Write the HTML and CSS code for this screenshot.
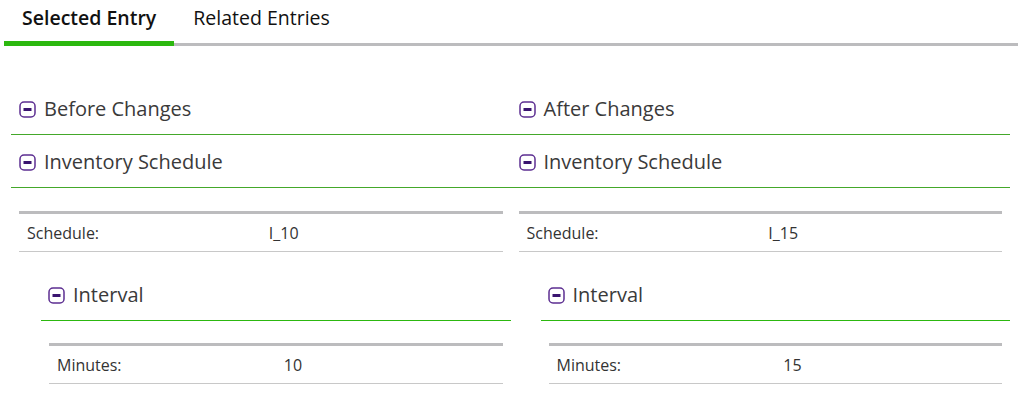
FILE: index.html
```html
<!DOCTYPE html>
<html>
<head>
<meta charset="utf-8">
<link rel="stylesheet" href="styles.css">
</head>
<body>
<div class="tabs">
  <div class="tab active">Selected Entry</div>
  <div class="tab">Related Entries</div>
</div>
<div class="content">
  <div class="col">
    <div class="hdr"><svg class="ico" viewBox="0 0 17 17" width="17" height="17"><rect x="1" y="1" width="15" height="15" rx="4" fill="none" stroke="#5c2e91" stroke-width="1.5"/><rect x="4.5" y="7" width="8" height="3" fill="#3a1470"/></svg><span>Before Changes</span></div>
    <div class="hdr"><svg class="ico" viewBox="0 0 17 17" width="17" height="17"><rect x="1" y="1" width="15" height="15" rx="4" fill="none" stroke="#5c2e91" stroke-width="1.5"/><rect x="4.5" y="7" width="8" height="3" fill="#3a1470"/></svg><span>Inventory Schedule</span></div>
    <div class="tbl">
      <div class="row"><div class="cell">Schedule:</div><div class="cell">I_10</div></div>
    </div>
    <div class="sub">
      <div class="hdr subhdr"><svg class="ico" viewBox="0 0 17 17" width="17" height="17"><rect x="1" y="1" width="15" height="15" rx="4" fill="none" stroke="#5c2e91" stroke-width="1.5"/><rect x="4.5" y="7" width="8" height="3" fill="#3a1470"/></svg><span>Interval</span></div>
      <div class="tbl inner">
        <div class="row"><div class="cell">Minutes:</div><div class="cell">10</div></div>
      </div>
    </div>
  </div>
  <div class="col">
    <div class="hdr"><svg class="ico" viewBox="0 0 17 17" width="17" height="17"><rect x="1" y="1" width="15" height="15" rx="4" fill="none" stroke="#5c2e91" stroke-width="1.5"/><rect x="4.5" y="7" width="8" height="3" fill="#3a1470"/></svg><span>After Changes</span></div>
    <div class="hdr"><svg class="ico" viewBox="0 0 17 17" width="17" height="17"><rect x="1" y="1" width="15" height="15" rx="4" fill="none" stroke="#5c2e91" stroke-width="1.5"/><rect x="4.5" y="7" width="8" height="3" fill="#3a1470"/></svg><span>Inventory Schedule</span></div>
    <div class="tbl">
      <div class="row"><div class="cell">Schedule:</div><div class="cell">I_15</div></div>
    </div>
    <div class="sub">
      <div class="hdr subhdr"><svg class="ico" viewBox="0 0 17 17" width="17" height="17"><rect x="1" y="1" width="15" height="15" rx="4" fill="none" stroke="#5c2e91" stroke-width="1.5"/><rect x="4.5" y="7" width="8" height="3" fill="#3a1470"/></svg><span>Interval</span></div>
      <div class="tbl inner">
        <div class="row"><div class="cell">Minutes:</div><div class="cell">15</div></div>
      </div>
    </div>
  </div>
</div>
</body>
</html>
```

FILE: styles.css
```css
* { box-sizing: border-box; }
body {
  margin: 0;
  font-family: "Open Sans", Lato, sans-serif;
  color: #333;
  background: #fff;
}
.tabs {
  display: flex;
  margin: 0 7px 0 4px;
  border-bottom: 3px solid #bcbcbe;
}
.tab {
  padding: 7px 18px 12px;
  font-size: 19.5px;
  line-height: 22px;
  color: #111;
}
.tab.active {
  font-weight: 600;
  border-bottom: 5px solid #2cb80f;
  margin-bottom: -3px;
}
.tab + .tab { padding-left: 19px; }
.content {
  display: grid;
  grid-template-columns: 1fr 1fr;
  margin: 36px 15px 0 11px;
}
.hdr {
  display: flex;
  align-items: center;
  gap: 8px;
  padding: 15px 8px 13px;
  line-height: 24px;
  font-size: 20px;
  color: #3a3a3a;
  border-bottom: 1px solid #44a82a;
}
.ico { flex: none; display: block; }
.tbl {
  margin: 23px 8px 0;
  border-top: 3px solid #bcbcbe;
}
.row {
  display: grid;
  grid-template-columns: 1fr 1fr;
  border-bottom: 1px solid #c8c8c8;
}
.cell {
  padding: 10px 8px 8px;
  line-height: 19px;
  font-size: 16px;
  color: #333;
}
.sub {
  margin: 16px 0 0 30px;
}
.subhdr {
  padding-left: 7px;
  border-bottom-color: #2cb80f;
}
.tbl.inner { margin-top: 22px; }
```
